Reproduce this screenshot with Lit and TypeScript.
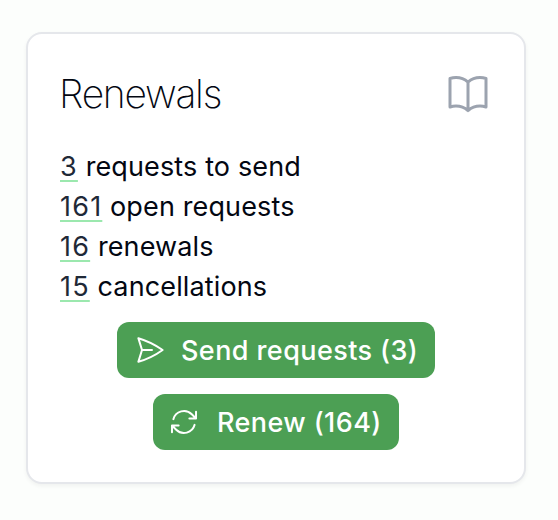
import { LitElement, html, css, svg } from "lit";
import { customElement } from "lit/decorators.js";

const icons = {
  book: svg`<path d="M12 6.042A8.967 8.967 0 0 0 6 3.75c-1.052 0-2.062.18-3 .512v14.25A8.987 8.987 0 0 1 6 18c2.305 0 4.408.867 6 2.292m0-14.25a8.966 8.966 0 0 1 6-2.292c1.052 0 2.062.18 3 .512v14.25A8.987 8.987 0 0 0 18 18a8.967 8.967 0 0 0-6 2.292m0-14.25v14.25"/>`,
  send: svg`<path d="M6 12 3.269 3.125A59.769 59.769 0 0 1 21.485 12 59.768 59.768 0 0 1 3.27 20.875L5.999 12Zm0 0h7.5"/>`,
  renew: svg`<path d="M16.023 9.348h4.992v-.001M2.985 19.644v-4.992m0 0h4.992m-4.993 0 3.181 3.183a8.25 8.25 0 0 0 13.803-3.7M4.031 9.865a8.25 8.25 0 0 1 13.803-3.7l3.181 3.182m0-4.991v4.99"/>`,
};

const stats: [number, string][] = [
  [3, "requests to send"],
  [161, "open requests"],
  [16, "renewals"],
  [15, "cancellations"],
];

@customElement("app-root")
export class AppRoot extends LitElement {
  static styles = css`
    :host {
      display: block;
      box-sizing: border-box;
      height: 100vh;
      padding: 32px 32px 36px 26px;
      background: #fcfefc;
      color: #030712;
      font-family: Inter, "Liberation Sans", sans-serif;
    }
    .card {
      box-sizing: border-box;
      height: 452px;
      padding: 32px;
      border: 2px solid #e5e7eb;
      border-radius: 16px;
      background: #fff;
      box-shadow: 0 2px 4px rgba(0, 0, 0, 0.05);
    }
    .header {
      display: flex;
      align-items: center;
      justify-content: space-between;
      height: 56px;
      margin-bottom: 25px;
    }
    .title {
      margin: 0 0 0 -1px;
      font-size: 39px;
      line-height: 56px;
      font-weight: 240;
      letter-spacing: -1.25px;
    }
    svg {
      display: block;
      flex: none;
      fill: none;
      stroke: currentColor;
      stroke-width: 1.5;
      stroke-linecap: round;
      stroke-linejoin: round;
    }
    .book {
      width: 48px;
      height: 48px;
      color: #9ca3af;
    }
    .stats {
      margin: 0;
      padding: 0;
      list-style: none;
      font-size: 27px;
      line-height: 40px;
      letter-spacing: 0.13px;
    }
    .count {
      color: #1f2937;
      letter-spacing: 1.2px;
      text-decoration: underline 2px #9be8ae;
      text-underline-offset: 4px;
      text-decoration-skip-ink: none;
    }
    .actions {
      display: flex;
      flex-direction: column;
      align-items: center;
      gap: 16px;
      margin-top: 15px;
    }
    .button {
      box-sizing: border-box;
      display: flex;
      align-items: center;
      gap: 16px;
      height: 56px;
      padding: 0 16px;
      border: 0;
      border-radius: 12px;
      background: #4c9f54;
      color: #fff;
      font: 500 27px/40px Inter, "Liberation Sans", sans-serif;
      letter-spacing: 0.42px;
      white-space: nowrap;
    }
    .button span {
      padding-top: 2px;
    }
    .button.send {
      width: 318px;
      padding-left: 16.7px;
      gap: 15.3px;
    }
    .button.renew {
      width: 246px;
      padding-left: 15.2px;
      gap: 16.8px;
    }
    .glyph {
      width: 32px;
      height: 32px;
    }
  `;

  render() {
    return html`
      <section class="card">
        <header class="header">
          <h2 class="title">Renewals</h2>
          <svg class="book" viewBox="0 0 24 24">${icons.book}</svg>
        </header>
        <ul class="stats">
          ${stats.map(([n, label]) => html`<li><a class="count">${n}</a> ${label}</li>`)}
        </ul>
        <div class="actions">
          <button class="button send"><svg class="glyph" viewBox="0 0 24 24">${icons.send}</svg><span>Send requests (3)</span></button>
          <button class="button renew"><svg class="glyph" viewBox="0 0 24 24">${icons.renew}</svg><span>Renew (164)</span></button>
        </div>
      </section>
    `;
  }
}
